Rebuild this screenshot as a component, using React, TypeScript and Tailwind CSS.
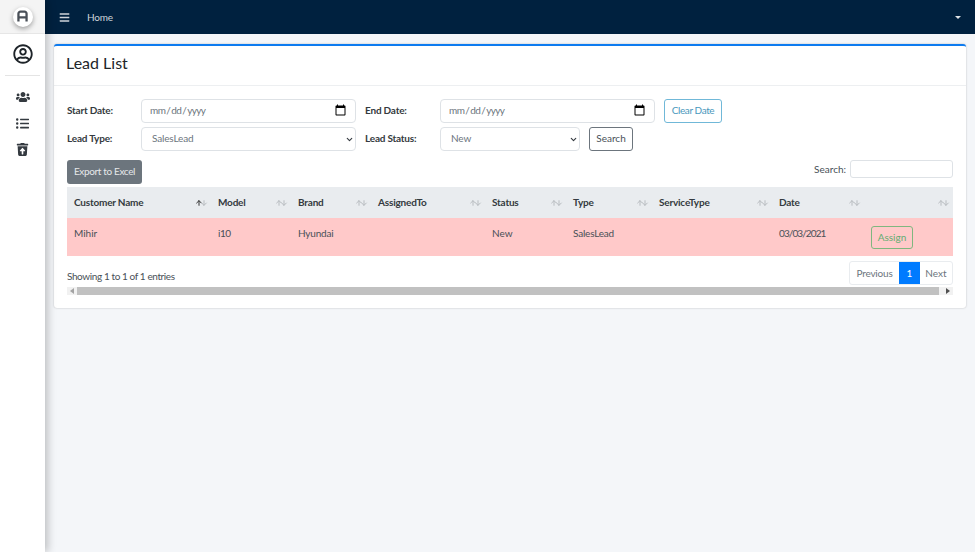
import { ArrowDown, ArrowUp, ChevronDown } from "lucide-react";
import { FaBars, FaListUl, FaRegUserCircle, FaTrashRestore, FaUsers } from "react-icons/fa";

const columns = [
  { label: "Customer Name", width: "w-[144px]", sortedAsc: true },
  { label: "Model", width: "w-[80px]" },
  { label: "Brand", width: "w-[80px]" },
  { label: "AssignedTo", width: "w-[114px]" },
  { label: "Status", width: "w-[81px]" },
  { label: "Type", width: "w-[86px]" },
  { label: "ServiceType", width: "w-[120px]" },
  { label: "Date", width: "w-[92px]" },
  { label: "", width: "w-[89px]" },
];

function Sidebar() {
  return (
    <aside className="z-10 flex w-[45px] shrink-0 flex-col items-center bg-white shadow-[3px_0_8px_rgba(0,0,0,0.22)]">
      <div className="flex h-[34px] w-full items-center justify-center border-b border-[#e6e6e6] bg-[#f4f4f4]">
        <div className="flex size-5 items-center justify-center rounded-full bg-white shadow-[0_2px_5px_rgba(0,0,0,0.35)]">
          <svg viewBox="0 0 16 16" className="size-[13px]" fill="none" stroke="#4a5058" strokeWidth="2.8">
            <path d="M3 14V4.5A2.5 2.5 0 0 1 5.5 2h5A2.5 2.5 0 0 1 13 4.5V14M3 9h10" />
          </svg>
        </div>
      </div>
      <div className="flex h-[42px] w-[35px] items-center justify-center border-b border-[#e4e4e4] pb-[2px]">
        <FaRegUserCircle className="size-[20px] text-[#1e2429]" />
      </div>
      <div className="mt-[14px] flex flex-col items-center gap-[13px] text-[#343a40]">
        <FaUsers className="size-[14px]" />
        <FaListUl className="size-[13px]" />
        <FaTrashRestore className="size-[13px]" />
      </div>
    </aside>
  );
}

function SortIcons({ asc }: { asc?: boolean }) {
  return (
    <span className="absolute top-[12px] right-[3px] flex">
      <ArrowUp className={asc ? "size-[8px] text-[#333]" : "size-[8px] text-[#b8bcc0]"} strokeWidth={3} />
      <ArrowDown className="-ml-[3px] size-[8px] text-[#b8bcc0]" strokeWidth={3} />
    </span>
  );
}

function SelectField({ value, className }: { value: string; className: string }) {
  return (
    <div className={`relative ${className}`}>
      <select
        className="h-[24px] w-full appearance-none rounded-[4px] border border-[#dee2e6] bg-white pl-[10px] text-[10px] tracking-[-0.15px] text-[#6c757d]"
        defaultValue={value}
      >
        <option>{value}</option>
      </select>
      <ChevronDown className="absolute top-[8px] right-[2px] size-[9px] text-[#343a40]" strokeWidth={3} />
    </div>
  );
}

function LeadTable() {
  return (
    <table className="w-[886px] table-fixed border-collapse text-[#495057]">
      <thead>
        <tr className="h-[31px] bg-[#e9ecef] text-[#343a40]">
          {columns.map((col) => (
            <th key={col.label || "action"} className={`relative ${col.width} pl-[7px] text-left font-bold tracking-[-0.2px]`}>
              {col.label}
              <SortIcons asc={col.sortedAsc} />
            </th>
          ))}
        </tr>
      </thead>
      <tbody>
        <tr className="h-[38px] bg-[#ffc9c9] align-top">
          <td className="pt-[8px] pl-[7px]">Mihir</td>
          <td className="pt-[8px] pl-[7px] tracking-[-0.5px]">i10</td>
          <td className="pt-[8px] pl-[7px] tracking-[-0.2px]">Hyundai</td>
          <td />
          <td className="pt-[8px] pl-[7px]">New</td>
          <td className="pt-[8px] pl-[7px] tracking-[-0.2px]">SalesLead</td>
          <td />
          <td className="pt-[8px] pl-[7px] tracking-[-0.9px]">03/03/2021</td>
          <td className="pt-[8px] pl-[7px]">
            <button className="h-[23px] w-[42px] rounded-[3px] border border-[#7fb77f] text-[#63ad73]">Assign</button>
          </td>
        </tr>
      </tbody>
    </table>
  );
}

function FakeScrollbar() {
  return (
    <div className="mt-[2px] flex h-[8px] items-center bg-[#f1f1f1]">
      <span className="ml-[3px] h-0 w-0 border-y-[3px] border-r-[4px] border-y-transparent border-r-[#a3a3a3]" />
      <div className="mx-[3px] h-[8px] flex-1 bg-[#c1c1c1]" />
      <span className="mr-[3px] ml-[4px] h-0 w-0 border-y-[3px] border-l-[4px] border-y-transparent border-l-[#505050]" />
    </div>
  );
}

export default function App() {
  const dateClass =
    "h-[24px] w-[215px] rounded-[4px] border border-[#dee2e6] bg-white pr-[6px] pl-[7px] text-[10px] tracking-[-0.6px] text-[#6c757d] [&::-webkit-calendar-picker-indicator]:size-[13px] [&::-webkit-calendar-picker-indicator]:m-0";

  return (
    <div className="flex h-[552px] w-[975px] overflow-hidden bg-[#f4f6f9] font-['Lato','Noto_Sans',sans-serif] text-[10px] text-[#343a40]">
      <Sidebar />
      <div className="min-w-0 flex-1">
        <header className="flex h-[34px] items-center bg-[#00213f] px-[14px] text-[#ced4da]">
          <FaBars className="size-[11px]" />
          <span className="ml-[17px] tracking-[-0.2px]">Home</span>
          <span className="ml-auto h-0 w-0 border-x-[3px] border-t-[3px] border-x-transparent border-t-[#dfe3e6]" />
        </header>

        <main className="px-[9px] pt-[10px]">
          <section className="h-[264px] rounded-[3px] border-t-2 border-[#0d7bf0] bg-white shadow-[0_0_2px_rgba(0,0,0,0.25)]">
            <div className="flex h-[40px] items-center border-b border-[#edeff1] pb-[6px] pl-[12px]">
              <h1 className="text-[16px] text-[#212529]">Lead List</h1>
            </div>

            <div className="px-[13px] pt-[12px]">
              <div className="flex h-[25px] items-center">
                <label className="w-[74px] font-bold tracking-[-0.2px]">Start Date:</label>
                <input type="date" className={dateClass} />
                <label className="ml-[9px] w-[75px] font-bold tracking-[-0.2px]">End Date:</label>
                <input type="date" className={dateClass} />
                <button className="ml-[9px] h-[24px] w-[58px] rounded-[3px] border border-[#70b8d8] tracking-[-0.4px] text-[#4a98bd]">Clear Date</button>
              </div>
              <div className="mt-[3px] flex h-[25px] items-center">
                <label className="w-[74px] font-bold tracking-[-0.2px]">Lead Type:</label>
                <SelectField value="SalesLead" className="w-[215px]" />
                <label className="ml-[9px] w-[75px] font-bold tracking-[-0.2px]">Lead Status:</label>
                <SelectField value="New" className="w-[140px]" />
                <button className="ml-[9px] h-[24px] w-[44px] rounded-[3px] border border-[#6c757d] text-[#495057]">Search</button>
              </div>

              <div className="mt-[9px] flex h-[24px] items-start justify-between">
                <button className="h-[24px] w-[75px] rounded-[3px] bg-[#6c757d] pb-[1px] tracking-[-0.35px] text-[#e6e8ea]">Export to Excel</button>
                <div className="flex items-center gap-[4px] text-[#495057]">
                  <span>Search:</span>
                  <input className="h-[18px] w-[103px] rounded-[3px] border border-[#dee2e6]" />
                </div>
              </div>

              <div className="mt-[3px]">
                <LeadTable />
              </div>

              <div className="mt-[4px] flex h-[25px] items-center justify-between">
                <span className="mt-[7px] tracking-[-0.4px] text-[#495057]">Showing 1 to 1 of 1 entries</span>
                <div className="flex h-[24px] overflow-hidden rounded-[3px] border border-[#e9ecef] text-[#6c757d]">
                  <span className="flex w-[49px] items-center justify-center pt-[1px] tracking-[-0.2px]">Previous</span>
                  <span className="flex w-[21px] items-center justify-center bg-[#007bff] pt-[1px] text-white">1</span>
                  <span className="flex w-[32px] items-center justify-center pt-[1px]">Next</span>
                </div>
              </div>

              <FakeScrollbar />
            </div>
          </section>
        </main>
      </div>
    </div>
  );
}
